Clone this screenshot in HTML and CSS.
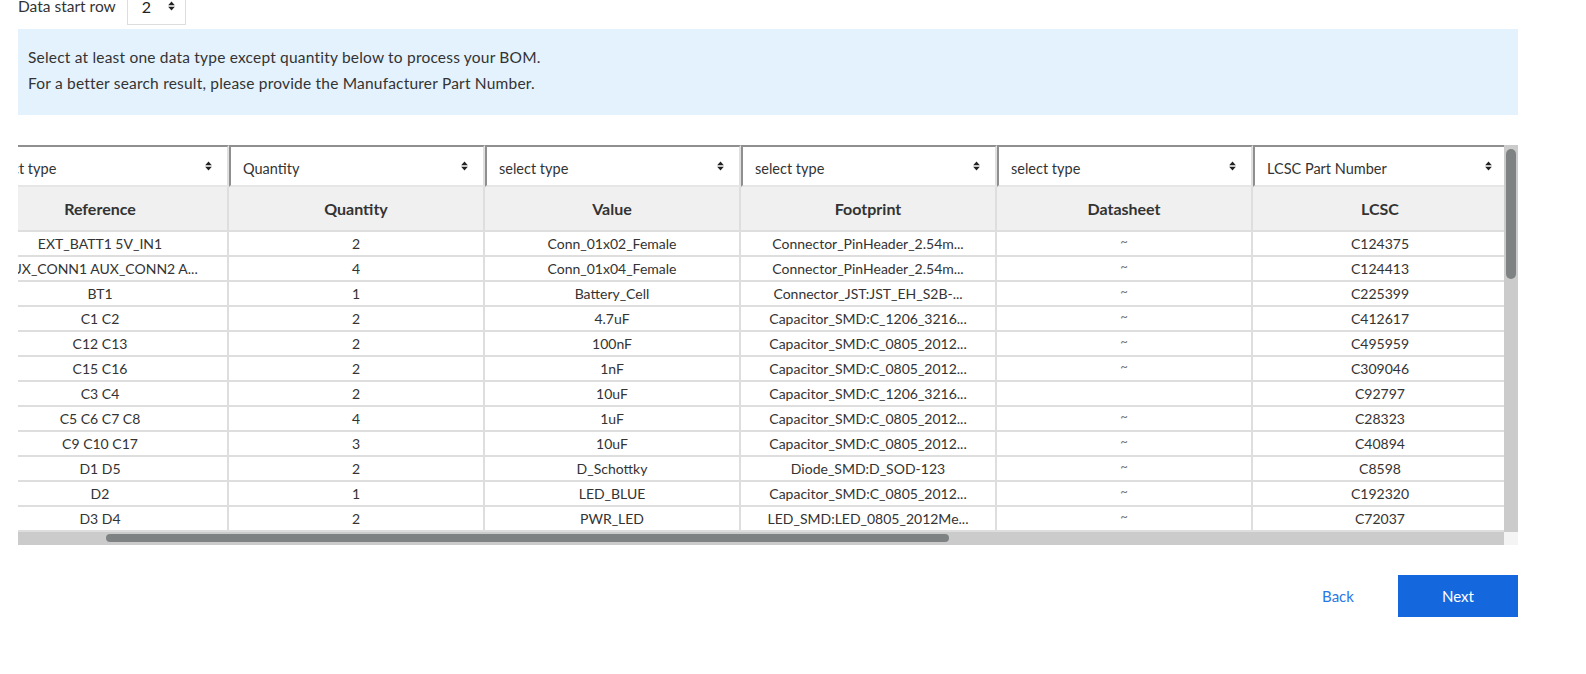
FILE: index.html
```html
<!DOCTYPE html>
<html lang="en">
<head>
<meta charset="utf-8">
<title>BOM Tool</title>
<link rel="stylesheet" href="styles.css">
</head>
<body>
<div class="page">
  <div class="start-row">
    <span class="start-label">Data start row</span>
    <div class="start-select"><span>2</span><svg class="caret" viewBox="0 0 8 12" width="7" height="10"><path d="M0 5 L4 0.5 L8 5 Z M0 7 L4 11.5 L8 7 Z" fill="#222"/></svg></div>
  </div>

  <div class="info">
    <p>Select at least one data type except quantity below to process your BOM.</p>
    <p>For a better search result, please provide the Manufacturer Part Number.</p>
  </div>

  <div class="grid-wrap">
    <div class="viewport">
      <div class="sheet">
        <div class="row select-row">
          <div class="sel"><span>select type</span><svg class="caret" viewBox="0 0 8 12" width="7" height="10"><path d="M0 5 L4 0.5 L8 5 Z M0 7 L4 11.5 L8 7 Z" fill="#222"/></svg></div>
          <div class="sel"><span>Quantity</span><svg class="caret" viewBox="0 0 8 12" width="7" height="10"><path d="M0 5 L4 0.5 L8 5 Z M0 7 L4 11.5 L8 7 Z" fill="#222"/></svg></div>
          <div class="sel"><span>select type</span><svg class="caret" viewBox="0 0 8 12" width="7" height="10"><path d="M0 5 L4 0.5 L8 5 Z M0 7 L4 11.5 L8 7 Z" fill="#222"/></svg></div>
          <div class="sel"><span>select type</span><svg class="caret" viewBox="0 0 8 12" width="7" height="10"><path d="M0 5 L4 0.5 L8 5 Z M0 7 L4 11.5 L8 7 Z" fill="#222"/></svg></div>
          <div class="sel"><span>select type</span><svg class="caret" viewBox="0 0 8 12" width="7" height="10"><path d="M0 5 L4 0.5 L8 5 Z M0 7 L4 11.5 L8 7 Z" fill="#222"/></svg></div>
          <div class="sel"><span>LCSC Part Number</span><svg class="caret" viewBox="0 0 8 12" width="7" height="10"><path d="M0 5 L4 0.5 L8 5 Z M0 7 L4 11.5 L8 7 Z" fill="#222"/></svg></div>
          <div class="sel"><span>select type</span><svg class="caret" viewBox="0 0 8 12" width="7" height="10"><path d="M0 5 L4 0.5 L8 5 Z M0 7 L4 11.5 L8 7 Z" fill="#222"/></svg></div>
        </div>
        <div class="row head-row">
          <div class="cell">Reference</div><div class="cell">Quantity</div><div class="cell">Value</div><div class="cell">Footprint</div><div class="cell">Datasheet</div><div class="cell">LCSC</div><div class="cell">MPN</div>
        </div>
        <div class="row"><div class="cell">EXT_BATT1 5V_IN1</div><div class="cell">2</div><div class="cell">Conn_01x02_Female</div><div class="cell">Connector_PinHeader_2.54m...</div><div class="cell tilde">~</div><div class="cell">C124375</div><div class="cell"></div></div>
        <div class="row"><div class="cell">AUX_CONN1 AUX_CONN2 A...</div><div class="cell">4</div><div class="cell">Conn_01x04_Female</div><div class="cell">Connector_PinHeader_2.54m...</div><div class="cell tilde">~</div><div class="cell">C124413</div><div class="cell"></div></div>
        <div class="row"><div class="cell">BT1</div><div class="cell">1</div><div class="cell">Battery_Cell</div><div class="cell">Connector_JST:JST_EH_S2B-...</div><div class="cell tilde">~</div><div class="cell">C225399</div><div class="cell"></div></div>
        <div class="row"><div class="cell">C1 C2</div><div class="cell">2</div><div class="cell">4.7uF</div><div class="cell">Capacitor_SMD:C_1206_3216...</div><div class="cell tilde">~</div><div class="cell">C412617</div><div class="cell"></div></div>
        <div class="row"><div class="cell">C12 C13</div><div class="cell">2</div><div class="cell">100nF</div><div class="cell">Capacitor_SMD:C_0805_2012...</div><div class="cell tilde">~</div><div class="cell">C495959</div><div class="cell"></div></div>
        <div class="row"><div class="cell">C15 C16</div><div class="cell">2</div><div class="cell">1nF</div><div class="cell">Capacitor_SMD:C_0805_2012...</div><div class="cell tilde">~</div><div class="cell">C309046</div><div class="cell"></div></div>
        <div class="row"><div class="cell">C3 C4</div><div class="cell">2</div><div class="cell">10uF</div><div class="cell">Capacitor_SMD:C_1206_3216...</div><div class="cell tilde"></div><div class="cell">C92797</div><div class="cell"></div></div>
        <div class="row"><div class="cell">C5 C6 C7 C8</div><div class="cell">4</div><div class="cell">1uF</div><div class="cell">Capacitor_SMD:C_0805_2012...</div><div class="cell tilde">~</div><div class="cell">C28323</div><div class="cell"></div></div>
        <div class="row"><div class="cell">C9 C10 C17</div><div class="cell">3</div><div class="cell">10uF</div><div class="cell">Capacitor_SMD:C_0805_2012...</div><div class="cell tilde">~</div><div class="cell">C40894</div><div class="cell"></div></div>
        <div class="row"><div class="cell">D1 D5</div><div class="cell">2</div><div class="cell">D_Schottky</div><div class="cell">Diode_SMD:D_SOD-123</div><div class="cell tilde">~</div><div class="cell">C8598</div><div class="cell"></div></div>
        <div class="row"><div class="cell">D2</div><div class="cell">1</div><div class="cell">LED_BLUE</div><div class="cell">Capacitor_SMD:C_0805_2012...</div><div class="cell tilde">~</div><div class="cell">C192320</div><div class="cell"></div></div>
        <div class="row"><div class="cell">D3 D4</div><div class="cell">2</div><div class="cell">PWR_LED</div><div class="cell">LED_SMD:LED_0805_2012Me...</div><div class="cell tilde">~</div><div class="cell">C72037</div><div class="cell"></div></div>
        <div class="row"><div class="cell">F1</div><div class="cell">1</div><div class="cell">Polyfuse</div><div class="cell">Fuse:Fuse_1206_3216Metric</div><div class="cell tilde">~</div><div class="cell">C70069</div><div class="cell"></div></div>
      </div>
    </div>
    <div class="vbar"><div class="vthumb"></div></div>
    <div class="hbar"><div class="hthumb"></div></div>
    <div class="corner"></div>
  </div>

  <div class="actions">
    <button class="btn-back">Back</button>
    <button class="btn-next">Next</button>
  </div>
</div>
</body>
</html>
```

FILE: styles.css
```css
* { box-sizing: border-box; }

body {
  margin: 0;
  background: #fff;
  color: #333;
  font-family: Lato, "Open Sans", "Liberation Sans", sans-serif;
}

.page {
  width: 1518px;
  padding-left: 18px;
}

.start-row {
  display: flex;
  align-items: center;
  gap: 11px;
  margin-top: -13px;
  height: 38px;
}

.start-label {
  font-size: 15.5px;
  color: #333;
}

.start-select {
  width: 59px;
  height: 38px;
  border: 1px solid #ddd;
  display: flex;
  align-items: center;
  justify-content: space-between;
  padding: 0 10px 0 14px;
  font-size: 16px;
  color: #222;
}

.caret { display: block; flex: none; }

.info {
  margin-top: 4px;
  height: 86px;
  background: #e4f2fd;
  padding: 15px 10px 0;
  font-size: 15.5px;
  letter-spacing: 0.2px;
  line-height: 26px;
  color: #333;
}

.info p { margin: 0; }

.grid-wrap {
  margin-top: 30px;
  display: grid;
  grid-template-columns: 1486px 14px;
  grid-template-rows: 387px 13px;
}

.viewport {
  overflow: hidden;
  background: #fff;
}

.sheet {
  margin-left: -45px;
  width: 1792px;
}

.row {
  display: grid;
  grid-template-columns: repeat(7, 256px);
  height: 25px;
}

.cell {
  border-right: 2px solid #dedede;
  border-bottom: 2px solid #dedede;
  font-size: 14px;
  line-height: 23px;
  text-align: center;
  white-space: nowrap;
  overflow: hidden;
  color: #333;
}

.tilde {
  font-size: 13px;
  line-height: 19px;
  color: #777;
}

.select-row { height: 42px; }

.sel {
  display: flex;
  align-items: center;
  justify-content: space-between;
  border-top: 2px solid #8f8f8f;
  border-left: 2px solid #8f8f8f;
  border-right: 2px solid #e0e0e0;
  border-bottom: 2px solid #e6e6e6;
  padding: 4px 15px 0 12px;
  font-size: 14.5px;
  color: #333;
  background: #fff;
  white-space: nowrap;
  overflow: hidden;
}

.sel .caret { margin-top: -4px; }

.head-row {
  height: 45px;
  background: #f0f0f0;
}

.head-row .cell {
  font-size: 16px;
  font-weight: 700;
  line-height: 43px;
  color: #333;
}

.vbar {
  background: #cbcbcb;
  padding: 4px 2px 0;
}

.vthumb {
  height: 130px;
  border-radius: 5px;
  background: #7f8283;
}

.hbar {
  background: #cbcbcb;
  padding: 2px 0 0 88px;
}

.hthumb {
  width: 843px;
  height: 8px;
  border-radius: 4px;
  background: #7f8283;
}

.corner { background: #f4f4f4; }

.actions {
  margin-top: 30px;
  display: flex;
  justify-content: flex-end;
}

.actions button {
  width: 120px;
  height: 42px;
  border: none;
  font-family: inherit;
  font-size: 15px;
  cursor: pointer;
}

.btn-back {
  background: transparent;
  color: #2b78e4;
}

.btn-next {
  background: #1467dc;
  color: #fff;
}
```
